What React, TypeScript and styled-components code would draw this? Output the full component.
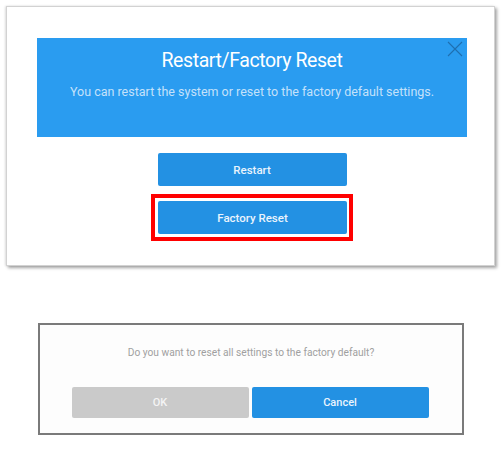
import React from "react";
import styled, { createGlobalStyle } from "styled-components";

const Global = createGlobalStyle`
  html, body { margin: 0; padding: 0; background: #ffffff; }
  body { font-family: Roboto, "Noto Sans", sans-serif; }
`;

const Page = styled.div`
  width: 504px;
  height: 451px;
  display: flex;
  flex-direction: column;
  background: #fff;
`;

const Panel = styled.div`
  margin: 6px 0 0 6px;
  width: 489px;
  height: 260px;
  box-sizing: border-box;
  padding-left: 3px;
  border: 1px solid #d2d2d2;
  box-shadow: 2px 2px 3px rgba(0, 0, 0, 0.35), -1px 0 2px rgba(0, 0, 0, 0.12);
  background: #fff;
  display: flex;
  flex-direction: column;
  align-items: center;
`;

const Header = styled.div`
  position: relative;
  margin-top: 31px;
  width: 430px;
  height: 99px;
  background: #2a9cf0;
  display: flex;
  flex-direction: column;
  align-items: center;
`;

const Title = styled.div`
  margin-top: 11px;
  font-size: 19.5px;
  letter-spacing: -0.4px;
  color: #ffffff;
  line-height: 24px;
`;

const Subtitle = styled.div`
  margin-top: 11px;
  font-size: 12.5px;
  color: rgba(225, 240, 253, 0.85);
  line-height: 15px;
`;

const Close = styled.svg`
  position: absolute;
  top: 3px;
  right: 4px;
`;

const Button = styled.div<{ $tone?: "blue" | "gray" }>`
  box-sizing: border-box;
  display: flex;
  align-items: center;
  justify-content: center;
  color: ${(p) => (p.$tone === "gray" ? "#f4f4f4" : "#eaf4fd")};
  font-weight: 500;
  font-size: 11.5px;
  border-radius: 2px;
  background: ${(p) => (p.$tone === "gray" ? "#cacaca" : "#2391e3")};
`;

const MainButton = styled(Button)`
  width: 189px;
  height: 33px;
`;

const FirstButton = styled(MainButton)`
  margin-top: 16px;
`;

const Highlight = styled.div`
  margin-top: 8px;
  width: 202px;
  height: 47px;
  box-sizing: border-box;
  border: 4px solid #ff0000;
  display: flex;
  align-items: center;
  justify-content: center;
  padding-left: 1px;
`;

const Dialog = styled.div`
  margin: 57px 0 0 38px;
  width: 426px;
  height: 112px;
  box-sizing: border-box;
  border: 2px solid #7a7a7a;
  background: #fdfdfd;
  display: flex;
  flex-direction: column;
  align-items: center;
`;

const Question = styled.div`
  margin-top: 21px;
  font-size: 10.2px;
  color: #a0a0a0;
  line-height: 14px;
`;

const Row = styled.div`
  margin-top: 27px;
  display: flex;
  gap: 3px;
  margin-right: 2px;
`;

const DialogButton = styled(Button)`
  width: 177px;
  height: 31px;
  font-size: 11px;
`;

export default function App() {
  return (
    <Page>
      <Global />
      <Panel>
        <Header>
          <Title>Restart/Factory Reset</Title>
          <Subtitle>You can restart the system or reset to the factory default settings.</Subtitle>
          <Close width="16" height="16" viewBox="0 0 16 16">
            <path d="M1 1 L15 15 M15 1 L1 15" stroke="#1f6fb0" strokeWidth="1.1" fill="none" />
          </Close>
        </Header>
        <FirstButton>Restart</FirstButton>
        <Highlight>
          <MainButton>Factory Reset</MainButton>
        </Highlight>
      </Panel>
      <Dialog>
        <Question>Do you want to reset all settings to the factory default?</Question>
        <Row>
          <DialogButton $tone="gray">OK</DialogButton>
          <DialogButton>Cancel</DialogButton>
        </Row>
      </Dialog>
    </Page>
  );
}
